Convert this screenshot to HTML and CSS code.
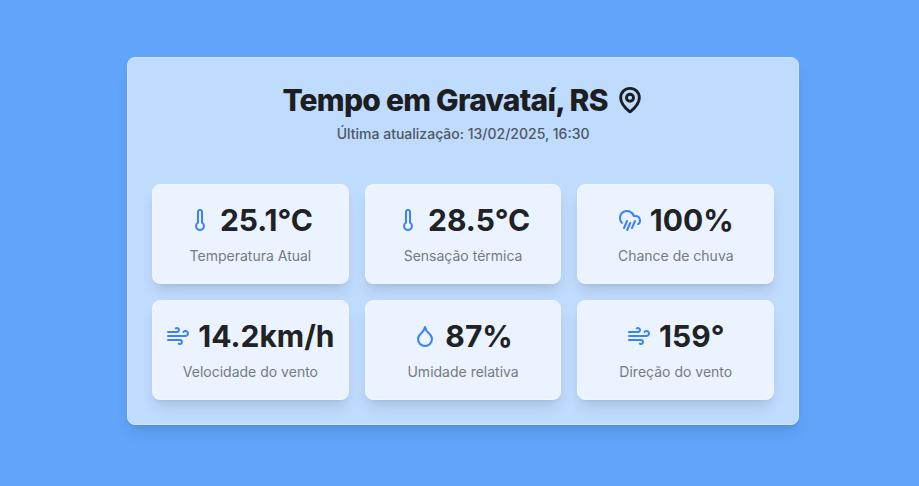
FILE: index.html
```html
<!DOCTYPE html>
<html lang="pt-BR">
<head>
<meta charset="utf-8">
<title>Tempo em Gravataí, RS</title>
<link rel="stylesheet" href="styles.css">
</head>
<body>
<main class="panel">
  <header class="header">
    <h1 class="title">Tempo em Gravataí, RS
      <svg class="pin" viewBox="0 0 24 24"><path d="M20 10c0 4.993-5.539 10.193-7.399 11.799a1 1 0 0 1-1.202 0C9.539 20.193 4 14.993 4 10a8 8 0 0 1 16 0"/><circle cx="12" cy="10" r="3"/></svg>
    </h1>
    <p class="updated">Última atualização: 13/02/2025, 16:30</p>
  </header>
  <section class="grid">
    <article class="card">
      <div class="value"><svg class="icon" viewBox="0 0 24 24"><path d="M14 4v10.54a4 4 0 1 1-4 0V4a2 2 0 0 1 4 0Z"/></svg><span>25.1°C</span></div>
      <p class="label">Temperatura Atual</p>
    </article>
    <article class="card">
      <div class="value"><svg class="icon" viewBox="0 0 24 24"><path d="M14 4v10.54a4 4 0 1 1-4 0V4a2 2 0 0 1 4 0Z"/></svg><span>28.5°C</span></div>
      <p class="label">Sensação térmica</p>
    </article>
    <article class="card">
      <div class="value"><svg class="icon" viewBox="0 0 24 24"><path d="M4 14.899A7 7 0 1 1 15.71 8h1.79a4.5 4.5 0 0 1 2.5 8.242"/><path d="m9.2 22 3-7"/><path d="m9 13-3 7"/><path d="m17 13-3 7"/></svg><span>100%</span></div>
      <p class="label">Chance de chuva</p>
    </article>
    <article class="card">
      <div class="value"><svg class="icon" viewBox="0 0 24 24"><path d="M12.8 19.6A2 2 0 1 0 14 16H2"/><path d="M17.5 8a2.5 2.5 0 1 1 2 4H2"/><path d="M9.8 4.4A2 2 0 1 1 11 8H2"/></svg><span>14.2km/h</span></div>
      <p class="label">Velocidade do vento</p>
    </article>
    <article class="card">
      <div class="value"><svg class="icon" viewBox="0 0 24 24"><path d="M12 22a7 7 0 0 0 7-7c0-2-1-3.9-3-5.5s-3.5-4-4-6.5c-.5 2.5-2 4.9-4 6.5C6 11.1 5 13 5 15a7 7 0 0 0 7 7z"/></svg><span>87%</span></div>
      <p class="label">Umidade relativa</p>
    </article>
    <article class="card">
      <div class="value"><svg class="icon" viewBox="0 0 24 24"><path d="M12.8 19.6A2 2 0 1 0 14 16H2"/><path d="M17.5 8a2.5 2.5 0 1 1 2 4H2"/><path d="M9.8 4.4A2 2 0 1 1 11 8H2"/></svg><span>159°</span></div>
      <p class="label">Direção do vento</p>
    </article>
  </section>
</main>
</body>
</html>
```
FILE: styles.css
```css
* { box-sizing: border-box; margin: 0; }
body {
  min-height: 100vh;
  display: flex;
  justify-content: center;
  align-items: flex-start;
  padding: 57px 0 0 7.2px;
  background: #60a5fa;
  color: #1c1e21;
  font-family: Inter, "Liberation Sans", sans-serif;
}
.panel {
  width: 672px;
  height: 368px;
  padding: 24px;
  border: 1px solid #d4e6fd;
  border-radius: 8px;
  background: #bfdbfe;
  box-shadow: 0 10px 15px -3px rgba(0,0,0,.1), 0 4px 6px -4px rgba(0,0,0,.1);
}
.header { text-align: center; height: 102px; }
.title {
  display: flex;
  justify-content: center;
  align-items: center;
  gap: 8px;
  height: 36px;
  font-size: 30px;
  line-height: 36px;
  font-weight: 800;
  letter-spacing: -0.75px;
}
.updated { margin-top: 6px; font-size: 14px; line-height: 20px; color: #4f5761; font-weight: 500; }
.grid { display: grid; grid-template-columns: repeat(3, 1fr); gap: 16px; }
.card {
  height: 100px;
  padding-top: 17px;
  border: 1px solid #eff6ff;
  border-radius: 8px;
  background: #eaf3ff;
  text-align: center;
  box-shadow: 0 10px 15px -3px rgba(0,0,0,.1), 0 4px 6px -4px rgba(0,0,0,.1);
}
.value {
  display: flex;
  align-items: center;
  justify-content: center;
  gap: 8px;
  color: #202224;
  font-size: 30px;
  line-height: 36px;
  font-weight: 700;
  white-space: nowrap;
}
.label { margin-top: 8px; font-size: 14px; line-height: 20px; color: #777a7e; }
.icon, .pin { flex: none; fill: none; stroke: currentColor; stroke-width: 2; stroke-linecap: round; stroke-linejoin: round; }
.icon { width: 24px; height: 24px; color: #3b82f6; }
.pin { width: 28px; height: 28px; stroke-width: 2.5; }
```
